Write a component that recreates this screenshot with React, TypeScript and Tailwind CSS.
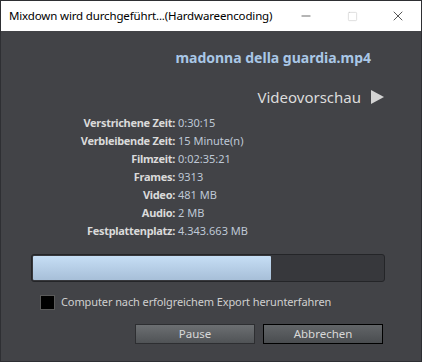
import { Minus, Square, X } from "lucide-react";

const rows: [string, string][] = [
  ["Verstrichene Zeit:", "0:30:15"],
  ["Verbleibende Zeit:", "15 Minute(n)"],
  ["Filmzeit:", "0:02:35:21"],
  ["Frames:", "9313"],
  ["Video:", "481 MB"],
  ["Audio:", "2 MB"],
  ["Festplattenplatz:", "4.343.663 MB"],
];

export default function App() {
  const progress = 68;

  return (
    <div
      className="w-[422px] h-[362px] flex flex-col border border-[#2e2f33] bg-[#424347] overflow-hidden"
      style={{ fontFamily: '"Noto Sans", "Open Sans", sans-serif' }}
    >
      {/* Title bar */}
      <div className="h-[30px] shrink-0 bg-white flex items-center justify-between">
        <span className="pl-2 text-[11.5px] text-black whitespace-nowrap tracking-[-0.15px]">
          Mixdown wird durchgeführt...(Hardwareencoding)
        </span>
        <div className="flex h-full items-center shrink-0">
          <div className="w-[46px] flex justify-center">
            <Minus className="w-[14px] h-[14px] text-black" strokeWidth={1} />
          </div>
          <div className="w-[46px] flex justify-center">
            <Square className="w-[11px] h-[11px] text-[#c4c4c4]" strokeWidth={1.2} />
          </div>
          <div className="w-[46px] flex justify-center">
            <X className="w-[16px] h-[16px] text-black" strokeWidth={1} />
          </div>
        </div>
      </div>

      {/* Body */}
      <div className="flex-1 flex flex-col">
        <div className="pt-[17px] pr-[50px] text-right text-[14px] font-bold text-[#a9c7e6] leading-[20px]">
          madonna della guardia.mp4
        </div>

        <div className="mt-[19px] pr-[36px] flex justify-end items-center gap-[9px] text-[15px] text-[#dcdcdc] leading-[20px]">
          <span>Videovorschau</span>
          <svg width="15" height="16" viewBox="0 0 15 16">
            <path d="M1 1 L14 8 L1 15 Z" fill="#d4d4d4" />
          </svg>
        </div>

        <div className="mt-[7px] flex flex-col text-[11px] leading-[18px]">
          {rows.map(([label, value]) => (
            <div key={label} className="flex">
              <span className="w-[174px] text-right font-bold text-[#dadada] tracking-[-0.3px]">
                {label}
              </span>
              <span className="pl-[3px] text-[#bfc8d6]">{value}</span>
            </div>
          ))}
        </div>

        <div className="mt-[14px] ml-[30px] mr-[36px] h-[28px] rounded-[3px] bg-[#37383c] border border-[#242528] p-[1px] flex">
          <div
            className="h-full rounded-[1px] bg-gradient-to-b from-[#c6def5] to-[#a7bfd8]"
            style={{ width: `${progress}%` }}
          />
        </div>

        <label className="mt-[12px] ml-[39px] flex items-center gap-[6px] text-[11px] text-[#d0d0d0] tracking-[-0.1px]">
          <span className="w-[15px] h-[15px] bg-black border border-[#5a5a5a]" />
          <span>Computer nach erfolgreichem Export herunterfahren</span>
        </label>

        <div className="mt-[13px] mr-[38px] flex justify-end gap-[8px] text-[11.5px]">
          <button className="w-[120px] h-[20px] border border-[#2d2e31] bg-gradient-to-b from-[#6c6f72] to-[#505356] text-[#d8d8d8] leading-none">
            Pause
          </button>
          <button className="w-[120px] h-[20px] border border-black bg-gradient-to-b from-[#626568] to-[#4a4d50] text-[#d8d8d8] leading-none">
            Abbrechen
          </button>
        </div>
      </div>
    </div>
  );
}
